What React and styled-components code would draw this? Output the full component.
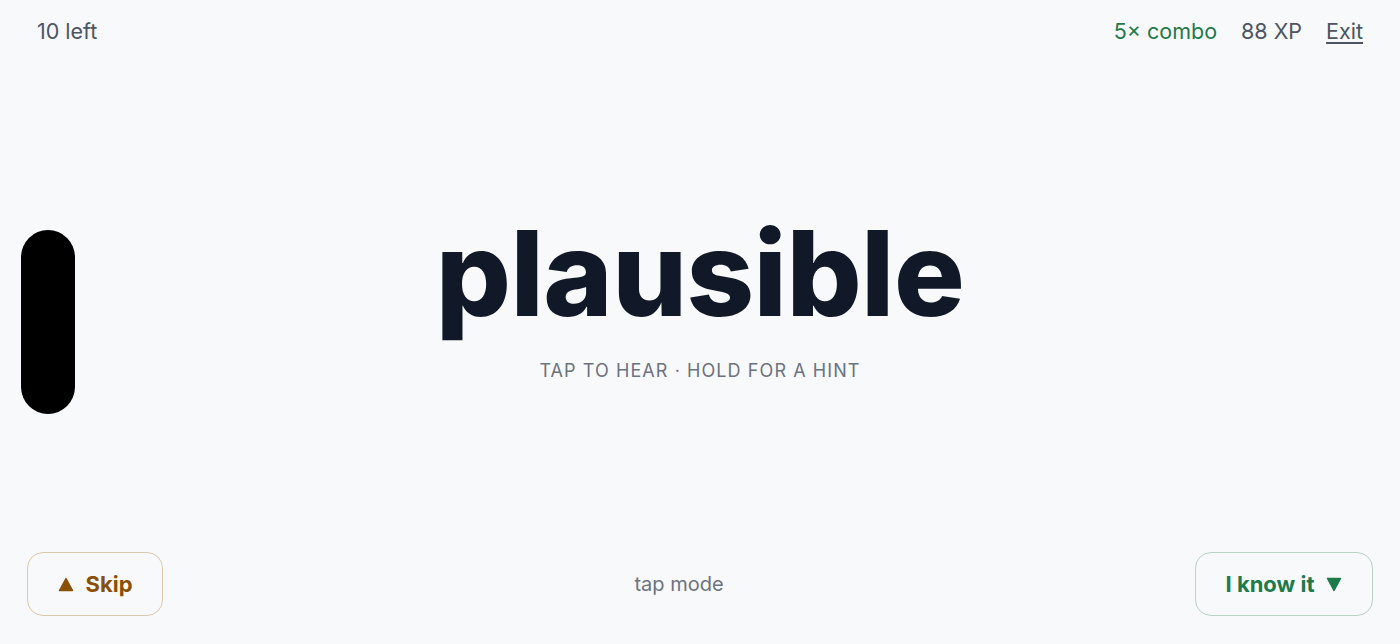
import React from 'react';
import styled, { createGlobalStyle } from 'styled-components';

const GlobalStyle = createGlobalStyle`
  html, body {
    margin: 0;
    padding: 0;
    background: #f8f9fb;
  }
  body {
    font-family: Inter, "Noto Sans", sans-serif;
  }
`;

const Screen = styled.div`
  position: relative;
  height: 644px;
  display: flex;
  flex-direction: column;
  background: #f8f9fb;
  overflow: hidden;
`;

const TopBar = styled.header`
  display: flex;
  justify-content: space-between;
  align-items: center;
  padding: 18px 37px 0 37px;
  font-size: 21.5px;
  color: #4b5563;
`;

const Stats = styled.div`
  display: flex;
  gap: 24px;
  align-items: center;
`;

const Stat = styled.span`
  color: ${p => (p.$accent ? '#1d7a4b' : '#4b5563')};
`;

const ExitLink = styled.a`
  color: #4b5563;
  text-decoration: underline;
  text-underline-offset: 3px;
  cursor: pointer;
`;

const Stage = styled.main`
  flex: 1;
  display: flex;
  flex-direction: column;
  align-items: center;
  justify-content: center;
  padding-bottom: 2px;
`;

const Word = styled.h1`
  margin: 0;
  font-size: 118px;
  font-weight: 800;
  letter-spacing: -0.005em;
  line-height: 1;
  color: #111827;
`;

const Hint = styled.p`
  margin: 28px 0 0 0;
  font-size: 18px;
  letter-spacing: 0.06em;
  color: #6b7280;
`;

const Footer = styled.footer`
  display: flex;
  justify-content: space-between;
  align-items: center;
  padding: 0 27px 28px 27px;
`;

const ActionButton = styled.button`
  height: 64px;
  padding: 0 ${p => p.$pad}px;
  border-radius: 16px;
  background: transparent;
  border: 1.5px solid ${p => p.$border};
  color: ${p => p.$color};
  font-family: inherit;
  font-size: 22px;
  font-weight: 700;
  display: flex;
  align-items: center;
  gap: 12px;
  cursor: pointer;
`;

const Mode = styled.span`
  font-size: 20px;
  color: #6b7280;
`;

const Island = styled.div`
  position: absolute;
  left: 21px;
  top: 230px;
  width: 54px;
  height: 184px;
  border-radius: 27px;
  background: #000;
`;

const Tri = ({ down }) => (
  <svg width="16" height="15" viewBox="0 0 16 15">
    <path
      d={down ? 'M1.5 1.5 L14.5 1.5 L8 13.5 Z' : 'M1.5 13.5 L14.5 13.5 L8 1.5 Z'}
      fill="currentColor"
      stroke="currentColor"
      strokeWidth="1.5"
      strokeLinejoin="round"
    />
  </svg>
);

export default function App() {
  return (
    <>
      <GlobalStyle />
      <Screen>
        <TopBar>
          <span>10 left</span>
          <Stats>
            <Stat $accent>5× combo</Stat>
            <Stat>88 XP</Stat>
            <ExitLink>Exit</ExitLink>
          </Stats>
        </TopBar>
        <Stage>
          <Word>plausible</Word>
          <Hint>TAP TO HEAR · HOLD FOR A HINT</Hint>
        </Stage>
        <Footer>
          <ActionButton $pad={29.5} $border="#dcc9ad" $color="#8a5106">
            <Tri />
            Skip
          </ActionButton>
          <Mode>tap mode</Mode>
          <ActionButton $pad={29.5} $border="#b9d5c5" $color="#1d7a4b">
            I know it
            <Tri down />
          </ActionButton>
        </Footer>
        <Island />
      </Screen>
    </>
  );
}
